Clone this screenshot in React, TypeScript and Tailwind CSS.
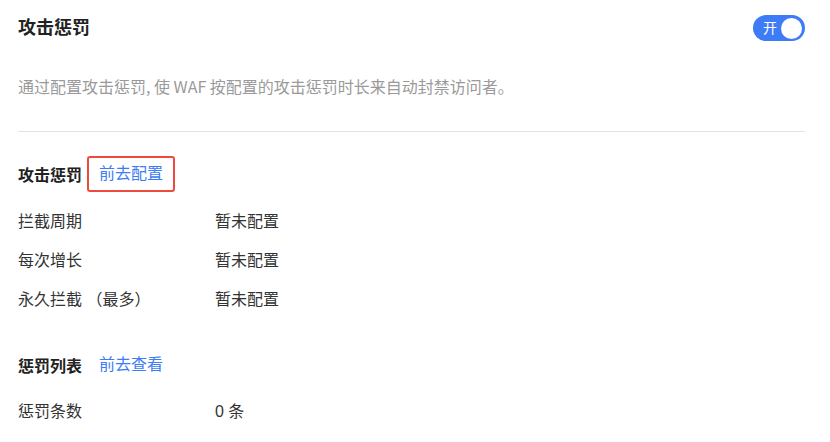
const font = {
  fontFamily: '"Liberation Sans", "Noto Sans CJK SC", sans-serif',
};

function Toggle() {
  return (
    <button
      type="button"
      className="relative flex h-[26px] w-[52px] items-center rounded-full bg-[#3d7cf6] pl-[10px]"
    >
      <span className="text-[14px] leading-none text-white">开</span>
      <span className="absolute right-[3px] top-[2.5px] h-[21px] w-[21px] rounded-full bg-white" />
    </button>
  );
}

function InfoRow({ label, value }: { label: string; value: string }) {
  return (
    <div className="flex h-6 items-center text-[16px] text-[#333]">
      <span className="w-[197px]">{label}</span>
      <span>{value}</span>
    </div>
  );
}

function SectionHeader({
  title,
  link,
  highlighted,
}: {
  title: string;
  link: string;
  highlighted?: boolean;
}) {
  return (
    <div className="flex h-9 items-center">
      <span className="w-[69px] pt-[3px] text-[16px] font-bold text-[#222]">{title}</span>
      <span
        className={
          highlighted
            ? "flex h-9 w-[88px] items-center rounded-[3px] border-2 border-[#ee4a3c] pl-[10px] text-[16px] text-[#3d7cf6]"
            : "flex h-9 w-[88px] items-center border-2 border-transparent pl-[10px] text-[16px] text-[#3d7cf6]"
        }
      >
        {link}
      </span>
    </div>
  );
}

export default function App() {
  return (
    <div className="min-h-[442px] w-[830px] bg-white pl-[18px] pr-[25px] pt-[15px]" style={font}>
      <div className="flex h-[26px] items-center justify-between">
        <h1 className="text-[18px] font-bold text-[#222]">攻击惩罚</h1>
        <Toggle />
      </div>

      <p className="mt-[33px] font-['Noto_Sans_CJK_SC',sans-serif] text-[16px] leading-6 text-[#9a9a9a]">
        通过配置攻击惩罚, 使 WAF 按配置的攻击惩罚时长来自动封禁访问者。
      </p>

      <div className="mt-[33px] h-px bg-[#e3e3e3]" />

      <div className="mt-[24px]">
        <SectionHeader title="攻击惩罚" link="前去配置" highlighted />
      </div>

      <div className="mt-[18px] flex flex-col gap-[15px]">
        <InfoRow label="拦截周期" value="暂未配置" />
        <InfoRow label="每次增长" value="暂未配置" />
        <InfoRow label="永久拦截 （最多）" value="暂未配置" />
      </div>

      <div className="mt-[35px]">
        <SectionHeader title="惩罚列表" link="前去查看" />
      </div>

      <div className="mt-[17px]">
        <InfoRow label="惩罚条数" value="0 条" />
      </div>
    </div>
  );
}
